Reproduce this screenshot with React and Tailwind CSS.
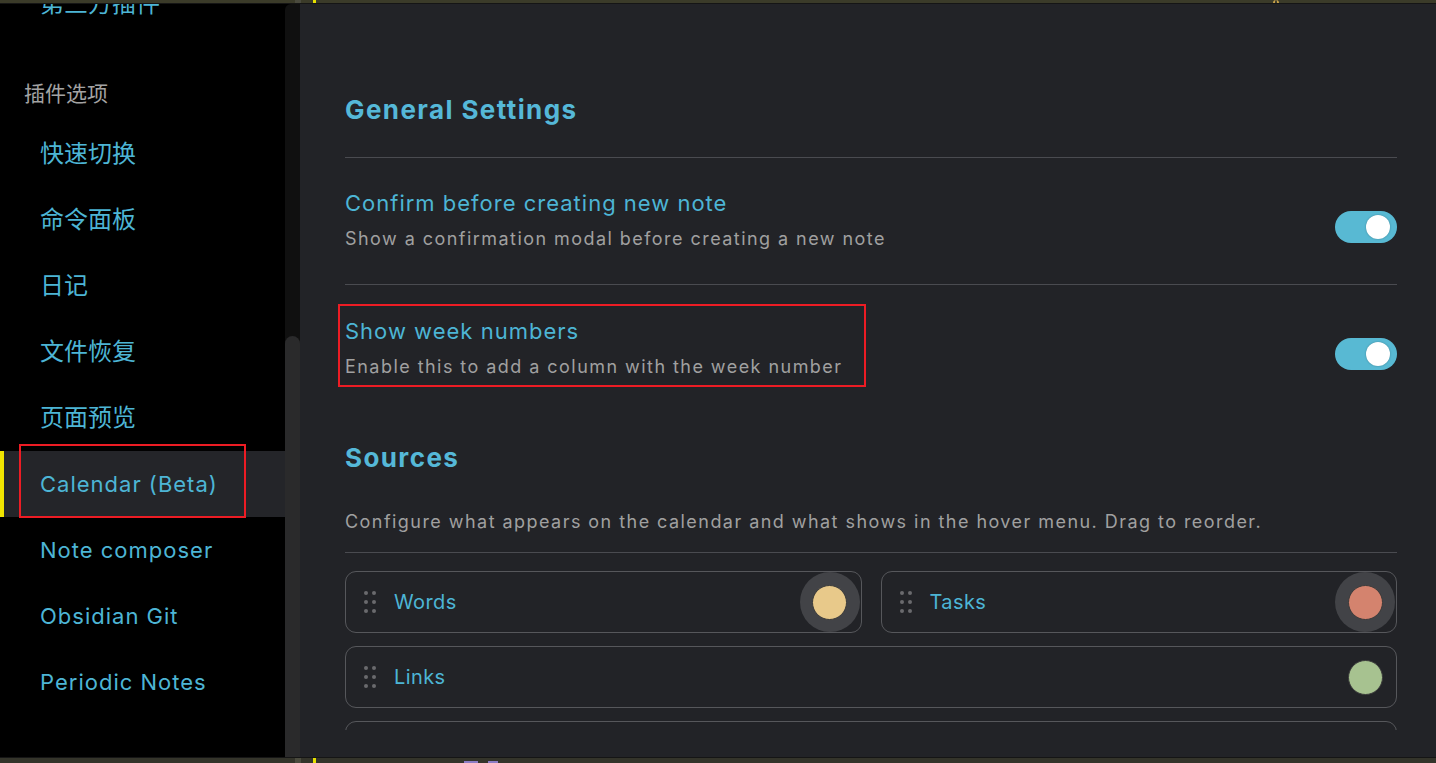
import React from "react";

const cjk = { fontFamily: 'Inter, "Noto Sans CJK SC", sans-serif' };

const navItems = [
  { label: "快速切换", cjk: true },
  { label: "命令面板", cjk: true },
  { label: "日记", cjk: true },
  { label: "文件恢复", cjk: true },
  { label: "页面预览", cjk: true },
  { label: "Calendar (Beta)", active: true },
  { label: "Note composer" },
  { label: "Obsidian Git" },
  { label: "Periodic Notes" },
];

const Toggle = ({ className = "" }) => (
  <div className={`w-[62px] h-[32px] rounded-full bg-[#58b9d3] flex items-center justify-end pr-[7px] shrink-0 ${className}`}>
    <div className="w-[24px] h-[24px] rounded-full bg-white shadow-[0_0_2px_rgba(0,0,0,0.3)]" />
  </div>
);

const DragHandle = () => (
  <svg width="14" height="24" viewBox="0 0 14 24" className="shrink-0">
    {[3, 11].map((cx) =>
      [3, 12, 21].map((cy) => (
        <circle key={`${cx}-${cy}`} cx={cx} cy={cy} r="2" fill="#6a6a6d" />
      ))
    )}
  </svg>
);

const SourceCard = ({ label, color, halo }) => (
  <div className="h-[62px] rounded-[11px] border border-[#56575b] flex items-center pl-[17px] pr-[1px]">
    <DragHandle />
    <span className="ml-[17px] text-[20px] tracking-[0.4px] text-[#4db5d5] flex-1">{label}</span>
    <div className={`w-[60px] h-[60px] rounded-full flex items-center justify-center ${halo ? "bg-[#424347]" : ""}`}>
      <div className="w-[35px] h-[35px] rounded-full border border-[#3a3a3a]" style={{ backgroundColor: color }} />
    </div>
  </div>
);

const Strip = ({ top }) => (
  <div className={`flex shrink-0 ${top ? "h-[4px] bg-[#3b3b29] border-b border-[#151515]" : "h-[6px] bg-[#34342a] border-t border-[#151515]"}`}>
    <div className="w-[295px]" />
    <div className="w-[6px] bg-[#4b4b3e]" />
    <div className="w-[12px]" />
    <div className="w-[3px] bg-[#e6e000]" />
    {top ? (
      <>
        <div className="w-[957px]" />
        <div className="w-[6px] border-x-2 border-b-0 border-[#c9a24a] rounded-t-full" />
      </>
    ) : (
      <>
        <div className="w-[148px]" />
        <div className="w-[14px] bg-[#8b7cc4] mt-[3px]" />
        <div className="w-[10px]" />
        <div className="w-[10px] bg-[#8b7cc4] mt-[3px]" />
      </>
    )}
  </div>
);

export default function App() {
  return (
    <div className="w-[1436px] h-[763px] flex flex-col overflow-hidden bg-black" style={cjk}>
      <Strip top />
      <div className="flex flex-1 min-h-0">
        {/* sidebar */}
        <aside className="w-[285px] bg-black overflow-hidden flex flex-col">
          <div className="h-[66px] -mt-[33px] flex items-center pl-[40px] text-[24px] text-[#4db5d5] shrink-0">
            第三方插件
          </div>
          <div className="h-[84px] pt-[43px] pl-[24px] text-[21px] leading-[28px] text-[#a3a3a3] shrink-0">
            插件选项
          </div>
          {navItems.map((it) => (
            <div
              key={it.label}
              className={`h-[66px] shrink-0 flex items-center pl-[40px] text-[#4db5d5] relative ${it.cjk ? "text-[24px]" : "text-[22px] tracking-[1px]"} ${it.active ? "bg-[#242529]" : ""}`}
            >
              {it.active && <div className="absolute left-0 top-0 bottom-0 w-[4px] bg-[#f0e400]" />}
              {it.active && <div className="absolute left-[19px] -top-[7px] w-[227px] h-[74px] border-2 border-[#ed1c24]" />}
              {it.label}
            </div>
          ))}
        </aside>
        <div className="w-[15px] bg-[#101010] rounded-tl-[6px] flex flex-col pt-[332px]">
          <div className="flex-1 bg-[#2a2a2b] rounded-t-full rounded-b-[6px]" />
        </div>

        {/* content */}
        <main className="flex-1 bg-[#222327] flex flex-col">
          <div className="h-[726px] overflow-hidden flex flex-col pl-[45px] pr-[39px]">
            <h2 className="mt-[90px] text-[26px] leading-[32px] font-bold tracking-[1.4px] text-[#55b8d8]">General Settings</h2>
            <div className="mt-[31px] border-t border-[#4a4b50]" />

            <div className="flex items-start justify-between pt-[31px] pb-[33px] border-b border-[#4a4b50]">
              <div>
                <div className="text-[22px] leading-[28px] tracking-[1px] text-[#4db5d5]">Confirm before creating new note</div>
                <div className="mt-[10px] text-[18px] leading-[24px] tracking-[1.45px] text-[#a0a0a0]">Show a confirmation modal before creating a new note</div>
              </div>
              <Toggle className="mt-[22px]" />
            </div>

            <div className="flex items-start justify-between pt-[32px]">
              <div className="relative">
                <div className="absolute -left-[7px] -top-[13px] w-[528px] h-[83px] border-2 border-[#ed1c24]" />
                <div className="text-[22px] leading-[28px] tracking-[1px] text-[#4db5d5]">Show week numbers</div>
                <div className="mt-[10px] text-[18px] leading-[24px] tracking-[1.45px] text-[#a0a0a0]">Enable this to add a column with the week number</div>
              </div>
              <Toggle className="mt-[21px]" />
            </div>

            <h2 className="mt-[63px] text-[26px] leading-[32px] font-bold tracking-[1.4px] text-[#55b8d8]">Sources</h2>
            <div className="mt-[36px] text-[18px] leading-[24px] tracking-[1.45px] text-[#a0a0a0]">
              Configure what appears on the calendar and what shows in the hover menu. Drag to reorder.
            </div>
            <div className="mt-[18px] border-t border-[#4a4b50]" />

            <div className="mt-[18px] grid grid-cols-2 gap-x-[19px] gap-y-[13px]">
              <SourceCard label="Words" color="#e8c98a" halo />
              <SourceCard label="Tasks" color="#d4836e" halo />
              <div className="col-span-2">
                <SourceCard label="Links" color="#a7c290" />
              </div>
              <div className="col-span-2">
                <SourceCard label="Backlinks" color="#8fa3c2" />
              </div>
            </div>
          </div>
        </main>
      </div>
      <Strip />
    </div>
  );
}
